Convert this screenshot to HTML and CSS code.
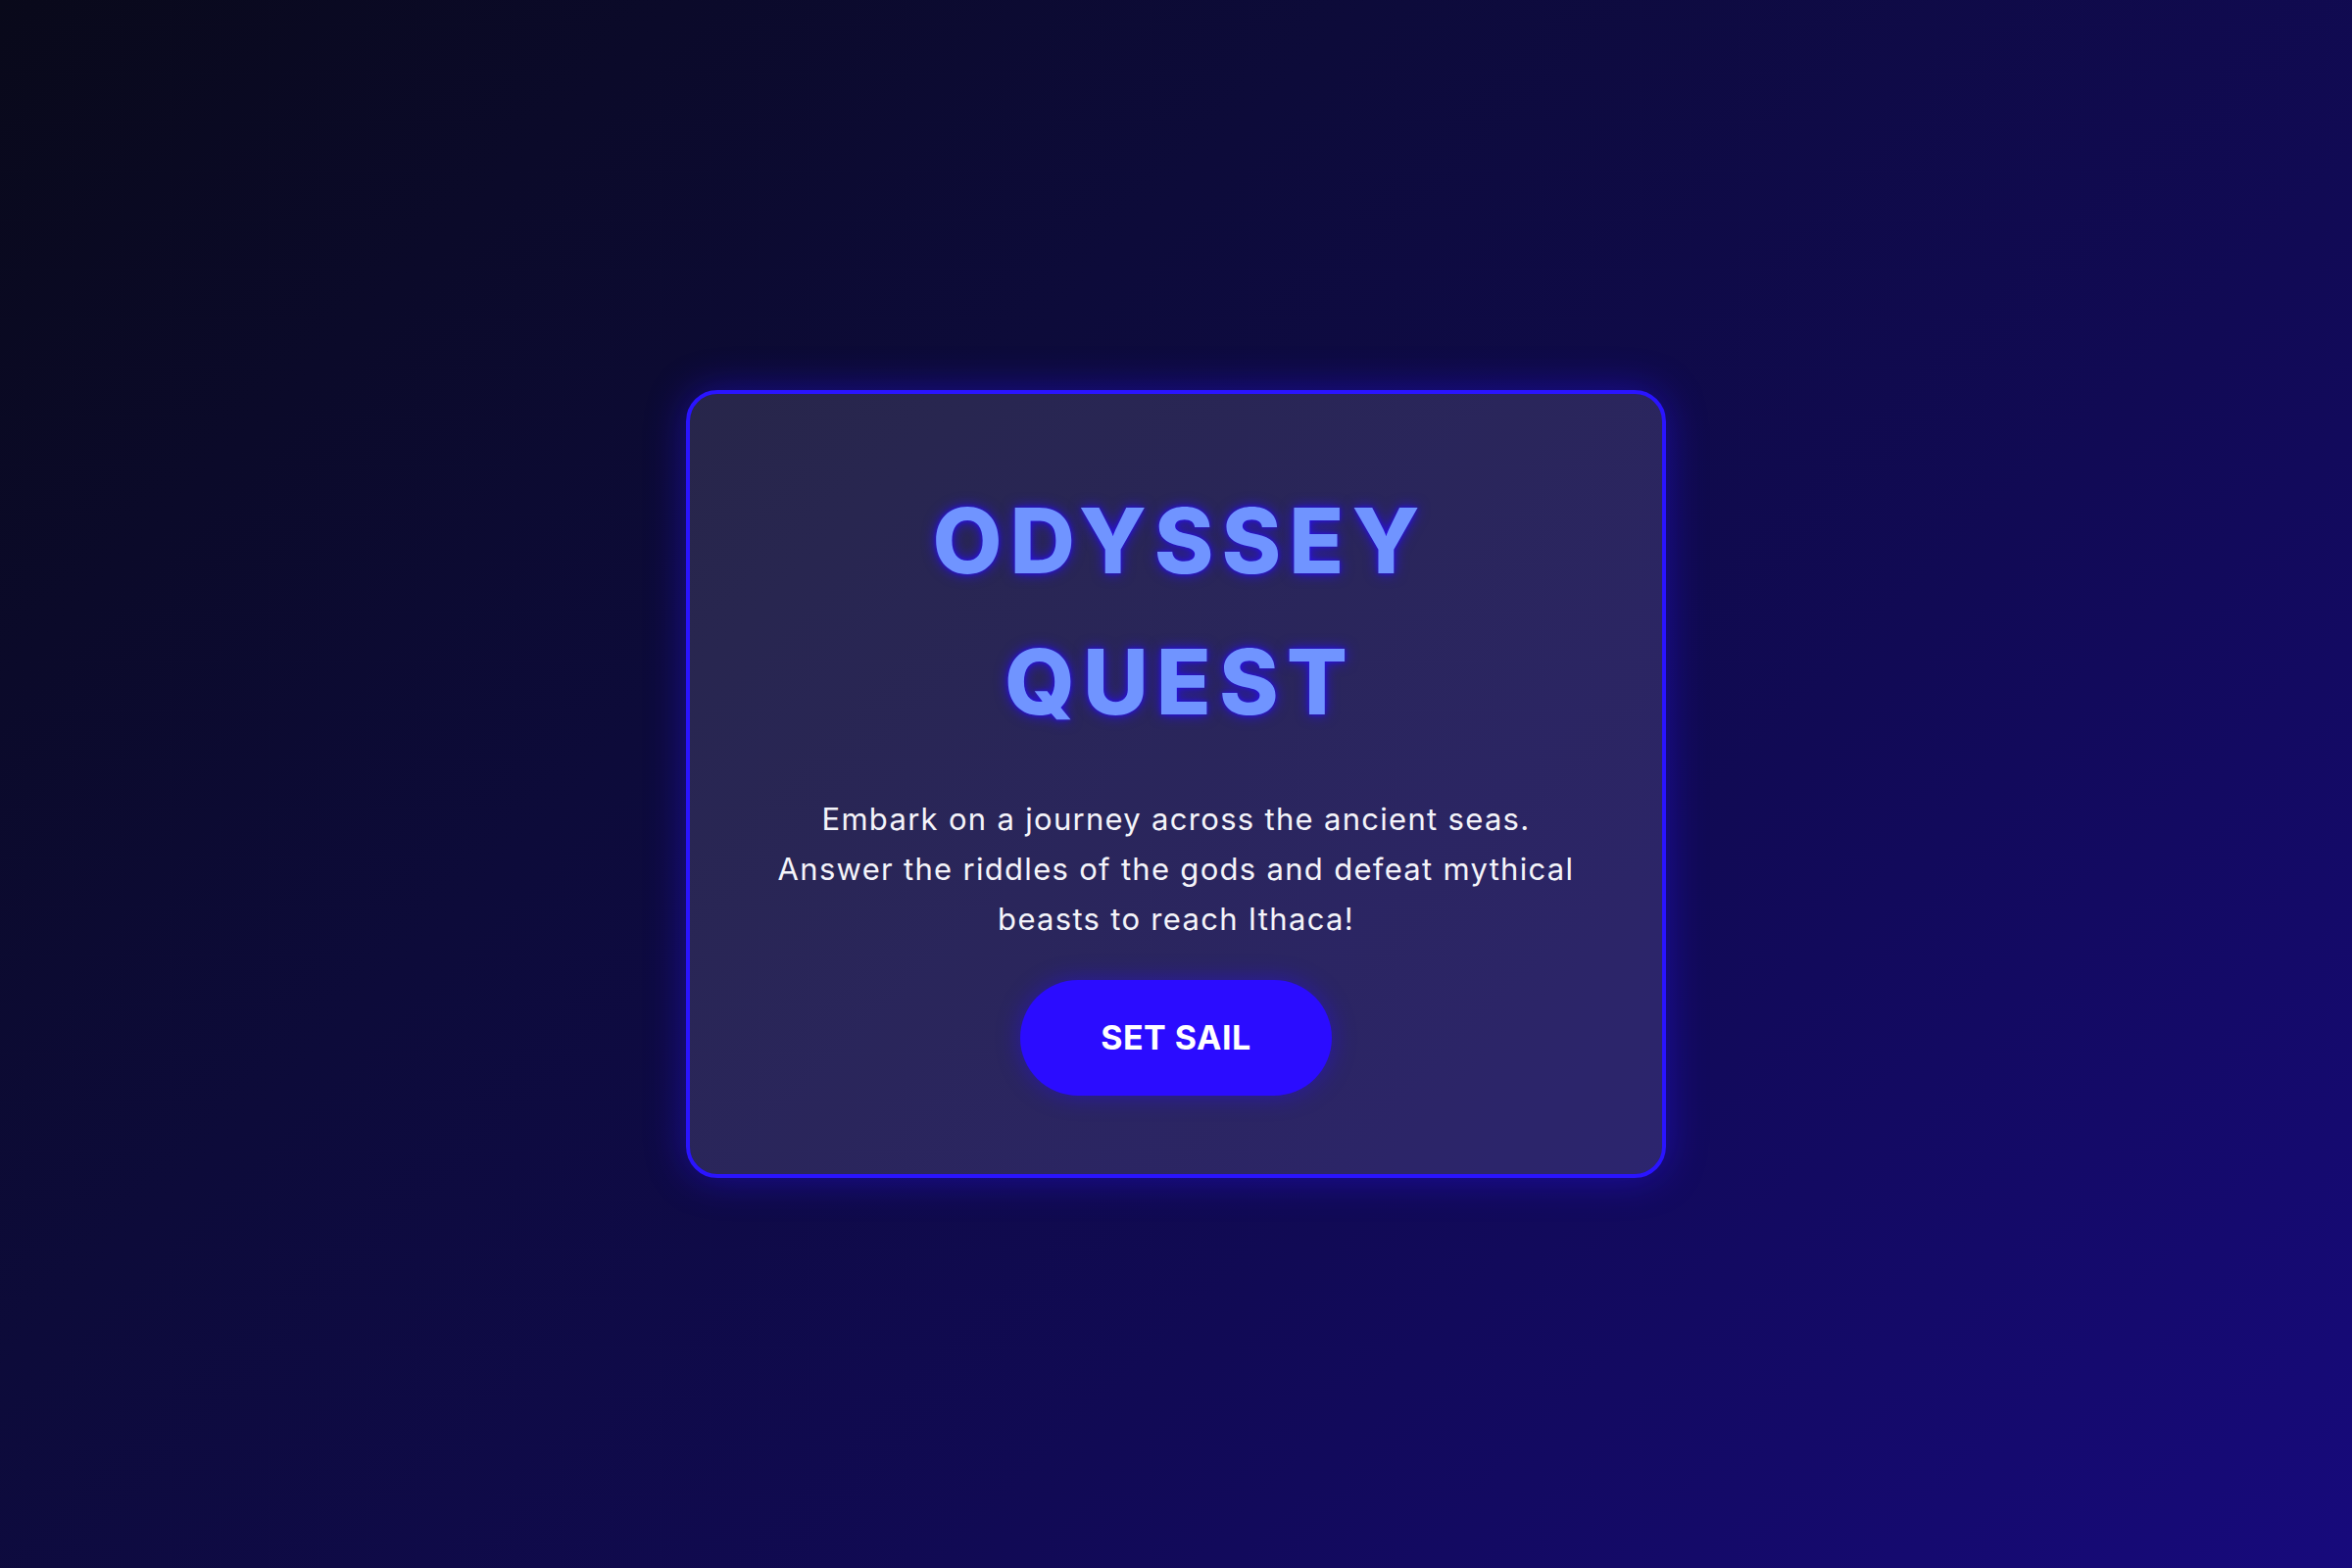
FILE: index.html
```html
<!DOCTYPE html>
<html lang="en">
<head>
<meta charset="utf-8">
<title>Odyssey Quest</title>
<link rel="stylesheet" href="styles.css">
</head>
<body>
<main class="stage">
  <section class="card">
    <h1 class="title">ODYSSEY<br>QUEST</h1>
    <p class="intro">Embark on a journey across the ancient seas. Answer the riddles of the gods and defeat mythical beasts to reach Ithaca!</p>
    <button class="cta" type="button">SET SAIL</button>
  </section>
</main>
</body>
</html>
```

FILE: styles.css
```css
* { box-sizing: border-box; }

html, body {
  margin: 0;
  padding: 0;
  height: 100%;
}

body {
  font-family: "Inter", "Noto Sans", "Liberation Sans", sans-serif;
  background: linear-gradient(135deg, #09091a 0%, #0d0b3a 35%, #110a55 65%, #170a7c 100%);
  color: #f2f2f8;
}

.stage {
  min-height: 100vh;
  display: flex;
  align-items: center;
  justify-content: center;
}

.card {
  width: 1000px;
  padding: 78px 80px 80px;
  border: 4px solid #2a14ff;
  border-radius: 32px;
  background: rgba(255, 255, 255, 0.115);
  box-shadow: 0 0 40px rgba(42, 16, 255, 0.45);
  text-align: center;
  display: flex;
  flex-direction: column;
  align-items: center;
}

.title {
  margin: 0;
  font-size: 92px;
  line-height: 144px;
  font-weight: 800;
  letter-spacing: 8px;
  padding-left: 8px;
  color: #7094ff;
  text-shadow: 0 0 14px rgba(42, 16, 240, 0.9), 0 0 4px #2a10e0;
}

.intro {
  margin: 42px 0 37px;
  max-width: 830px;
  font-size: 31px;
  line-height: 51.2px;
  font-weight: 400;
  letter-spacing: 1.3px;
  color: #f4f4fa;
}

.cta {
  font-family: inherit;
  font-size: 34px;
  line-height: 54px;
  font-weight: 700;
  letter-spacing: 0.5px;
  color: #ffffff;
  background: #2b0cff;
  border: none;
  border-radius: 59px;
  padding: 32px 82px;
  box-shadow: 0 0 24px rgba(43, 12, 255, 0.45);
  cursor: pointer;
}
```
